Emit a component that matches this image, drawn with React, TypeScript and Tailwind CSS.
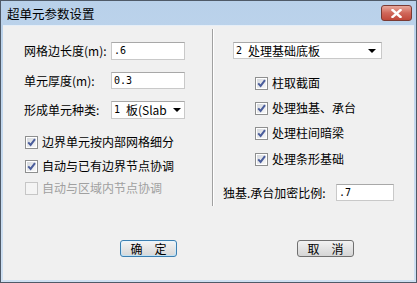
import React from "react";

function Check({ checked, disabled }: { checked?: boolean; disabled?: boolean }) {
  return (
    <span
      className={
        disabled
          ? "w-[13px] h-[13px] shrink-0 border border-[#c6c6c6] bg-[#f4f4f4] flex items-center justify-center"
          : "w-[13px] h-[13px] shrink-0 border border-[#8e8f8f] bg-white flex items-center justify-center"
      }
    >
      <span
        className={
          disabled
            ? "w-[9px] h-[9px] bg-[#f4f4f4]"
            : "w-[9px] h-[9px] bg-gradient-to-br from-[#d6d9de] to-[#f8f8f8] flex items-center justify-center"
        }
      >
        {checked && (
          <svg width="9" height="9" viewBox="0 0 9 9">
            <path d="M1.2 4.4 L3.6 6.9 L8 1.2" stroke="#4a5d9b" strokeWidth="2" fill="none" />
          </svg>
        )}
      </span>
    </span>
  );
}

function CheckRow({
  label,
  checked,
  disabled,
  cls,
}: {
  label: string;
  checked?: boolean;
  disabled?: boolean;
  cls: string;
}) {
  return (
    <div className={cls}>
      <Check checked={checked} disabled={disabled} />
      <span className={disabled ? "ml-[4px] text-[#a0a0a0]" : "ml-[4px] text-black"}>{label}</span>
    </div>
  );
}

function Arrow() {
  return (
    <svg width="8" height="4" viewBox="0 0 8 4">
      <path d="M0 0 H8 L4 4 Z" fill="#000" />
    </svg>
  );
}

export default function App() {
  return (
    <div className="w-[417px] h-[283px] flex flex-col border border-[#4f5a68] bg-gradient-to-b from-[#b9d1ea] to-[#cfe0f2] font-['Noto_Sans_CJK_SC',sans-serif] text-[12px] leading-[14px] text-black overflow-hidden">
      {/* title bar */}
      <div className="h-[24px] shrink-0 flex items-start justify-between pl-[6px] pr-[4px]">
        <span className="mt-[5px] text-[12.5px] leading-[16px] text-black">超单元参数设置</span>
        <div className="mt-[4px] w-[31px] h-[16px] rounded-[3px] border border-[#7a3a33] bg-gradient-to-b from-[#e8a99c] via-[#d0675a] to-[#c0483a] flex items-center justify-center">
          <svg width="11" height="9" viewBox="0 0 11 9">
            <path d="M1.5 1 L9.5 8 M9.5 1 L1.5 8" stroke="#ffffff" strokeWidth="2.4" strokeLinecap="square" />
          </svg>
        </div>
      </div>

      {/* client area */}
      <div className="flex-1 mx-[2px] mb-[2px] bg-[#f0f0f0] flex flex-col border-t border-[#e6eef7]">
        <div className="h-[185px] flex flex-row">
          {/* left column */}
          <div className="w-[209px] shrink-0 flex flex-col pl-[21px] pt-[16px]">
            <div className="flex items-center h-[18px]">
              <span className="w-[87px] shrink-0">网格边长度(m):</span>
              <div className="w-[74px] h-[18px] bg-white border border-[#c9c9c9] border-t-[#a8a8a8] flex items-center pl-[2px] font-['DejaVu_Sans_Mono',monospace] text-[10px]">
                .6
              </div>
            </div>
            <div className="flex items-center h-[17px] mt-[12px]">
              <span className="w-[87px] shrink-0">单元厚度(m):</span>
              <div className="w-[74px] h-[17px] bg-white border border-[#c9c9c9] border-t-[#a8a8a8] flex items-center pl-[2px] font-['DejaVu_Sans_Mono',monospace] text-[10px]">
                0.3
              </div>
            </div>
            <div className="flex items-center h-[18px] mt-[12px]">
              <span className="w-[87px] shrink-0">形成单元种类:</span>
              <div className="w-[74px] h-[18px] bg-white border border-[#c9c9c9] border-t-[#a8a8a8] flex items-center pl-[2px]">
                <div className="w-[56px] whitespace-nowrap flex items-center">
                  <span className="font-['DejaVu_Sans_Mono',monospace] text-[10px] w-[12px]">1</span>
                  <span>板(Slab</span>
                </div>
                <div className="flex-1 flex justify-center">
                  <Arrow />
                </div>
              </div>
            </div>
            <CheckRow cls="flex items-center h-[20px] mt-[13px] pl-[1px]" label="边界单元按内部网格细分" checked />
            <CheckRow cls="flex items-center h-[20px] mt-[4px] pl-[1px]" label="自动与已有边界节点协调" checked />
            <CheckRow cls="flex items-center h-[20px] mt-[2px] pl-[1px]" label="自动与区域内节点协调" disabled />
          </div>

          {/* divider */}
          <div className="mt-[3px] h-[177px] w-[2px] flex shrink-0">
            <div className="w-px h-full bg-[#a0a0a0]" />
            <div className="w-px h-full bg-white" />
          </div>

          {/* right column */}
          <div className="flex-1 flex flex-col pt-[16px]">
            <div className="ml-[19px] w-[149px] h-[17px] bg-white border border-[#c9c9c9] border-t-[#a8a8a8] flex items-center pl-[2px]">
              <span className="font-['DejaVu_Sans_Mono',monospace] text-[10px] w-[12px]">2</span>
              <span>处理基础底板</span>
              <div className="ml-auto mr-[5px]">
                <Arrow />
              </div>
            </div>
            <div className="pl-[41px] flex flex-col">
              <CheckRow cls="flex items-center h-[20px] mt-[14px]" label="柱取截面" checked />
              <CheckRow cls="flex items-center h-[20px] mt-[5px]" label="处理独基、承台" checked />
              <CheckRow cls="flex items-center h-[20px] mt-[5px]" label="处理柱间暗梁" checked />
              <CheckRow cls="flex items-center h-[20px] mt-[6px]" label="处理条形基础" checked />
            </div>
            <div className="flex items-center pl-[9px] mt-[15px] h-[17px]">
              <span className="w-[113px] shrink-0 whitespace-nowrap">独基.承台加密比例:</span>
              <div className="w-[58px] h-[17px] bg-white border border-[#c9c9c9] border-t-[#a8a8a8] flex items-center pl-[2px] font-['DejaVu_Sans_Mono',monospace] text-[10px]">
                .7
              </div>
            </div>
          </div>
        </div>

        {/* buttons */}
        <div className="flex flex-row pl-[117px] mt-[29px]">
          <div className="w-[57px] h-[17px] rounded-[3px] border border-[#3c7fb1] bg-gradient-to-b from-[#eaf6fd] to-[#bfe0f3] p-px">
            <div className="w-full h-full rounded-[2px] bg-gradient-to-b from-[#f2f2f2] to-[#d9d9d9] flex items-center justify-center gap-[12px]">
              <span>确</span>
              <span>定</span>
            </div>
          </div>
          <div className="ml-[120px] w-[57px] h-[17px] rounded-[3px] border border-[#707070] bg-gradient-to-b from-[#f2f2f2] to-[#d5d5d5] flex items-center justify-center gap-[12px]">
            <span>取</span>
            <span>消</span>
          </div>
        </div>
      </div>
    </div>
  );
}
